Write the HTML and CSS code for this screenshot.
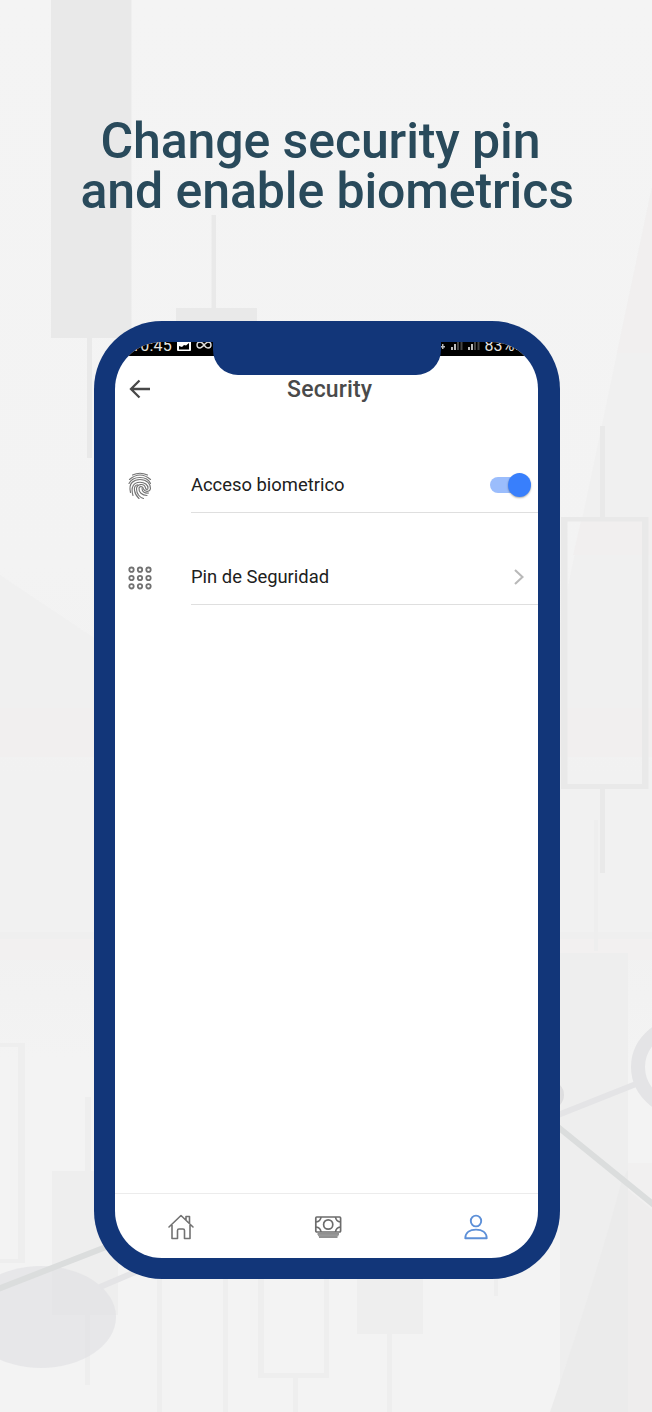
FILE: index.html
```html
<!DOCTYPE html>
<html lang="en">
<head>
<meta charset="utf-8">
<title>Security</title>
<link rel="stylesheet" href="styles.css">
</head>
<body>
<main class="poster">
  <svg class="backdrop" viewBox="0 0 652 1412" aria-hidden="true">
    <defs>
      <linearGradient id="base" x1="0" y1="0" x2="0" y2="1">
        <stop offset="0" stop-color="#f4f4f4"/><stop offset=".4" stop-color="#f3f3f3"/><stop offset=".55" stop-color="#f1f1f1"/><stop offset=".66" stop-color="#f1f1f1"/><stop offset=".75" stop-color="#f3f3f3"/><stop offset="1" stop-color="#f3f3f3"/>
      </linearGradient>
    </defs>
    <rect width="652" height="1412" fill="url(#base)"/>
    <path d="M0 575L94 638V708H0Z" fill="#f0f0f0"/>
    <path d="M0 708H94V757H0Z" fill="#f1efef"/>
    <path d="M652 187L570 577L540 720V757H652Z" fill="#f0f0f0"/>
    <path d="M652 187L617 353H652ZM582 517L573 555H652V517Z" fill="#f1efef"/>
    <path d="M560 708H652V757H560Z" fill="#f1efef"/>
    <path d="M0 932H652V939H0Z" fill="#efefef"/>
    <path d="M0 939H652V960H0Z" fill="#f2f0f0"/>
    <g fill="#e9e9e9">
      <path d="M51 0H131.500V338H51ZM87 338H92V458H87ZM211.500 215H216V308H211.500ZM176 308H257V340H176Z"/>
      <path d="M600 426H605V517H600ZM600 789H605V873H600Z"/>
      <path fill-rule="evenodd" d="M561 517H648.500V789H561ZM567.500 521.500V784H642V521.500Z"/>
    </g>
    <g fill="#eee">
      <path d="M594 820H598V951H594ZM560 953H628V1412H560Z"/>
      <path d="M85 1097H91V1171H85ZM52 1171H118V1315H52ZM85 1315H90V1385H85Z"/>
      <path fill-rule="evenodd" d="M-2 1043H25V1263H-2ZM-2 1047V1259H18V1047Z"/>
      <path d="M157 1270H162V1412H157ZM223 1270H228V1412H223ZM293 1378H298V1412H293ZM357 1270H423V1334H357ZM387 1334H392V1412H387ZM494 1270H498V1296H494Z"/>
      <path fill-rule="evenodd" d="M258 1270H329V1378H258ZM264 1270V1373H324V1270Z"/>
    </g>
    <path d="M628 1170V1412H550Q594 1285 622 1180Z" fill="#ebebeb"/>
    <path d="M628 1163H652V1412H628Z" fill="#eeeded"/>
    <path d="M628 1163H652V1210L628 1190Z" fill="#f1f0f0"/>
    <ellipse cx="41" cy="1317" rx="75" ry="51" fill="#dcdce0" opacity=".52"/>
    <g fill="none" stroke-width="6">
      <path d="M100 1287L140 1270M558 1115L636 1084" stroke="#e4e4e6"/>
      <path d="M-2 1289L106 1247M558 1127L654 1205" stroke="#dbdddd"/>
      <ellipse cx="693" cy="1067" rx="55" ry="46" stroke="#e4e4e6" stroke-width="14"/>
    </g>
    <ellipse cx="550" cy="1095" rx="14" ry="14" fill="#dedee0"/>
  </svg>

  <h1 class="headline"><span class="headline-top">Change security pin</span><span class="headline-bottom">and enable biometrics</span></h1>

  <section class="phone">
    <div class="screen">
      <div class="status">
        <span class="clock">10:45</span>
        <svg class="status-picture" viewBox="0 0 14 14"><path fill-rule="evenodd" d="M1 0H13Q14 0 14 1V12Q14 13 13 13H1Q0 13 0 12V1Q0 0 1 0ZM2 8V11.500H12V5L9 7.500L7 7L5 9Z" fill="#fff"/></svg>
        <svg class="status-loop" viewBox="0 0 16 8"><path d="M8 4C6 1 5 1 4 1Q1 1 1 4T4 7C6 7 10 1 12 1Q15 1 15 4T12 7C10 7 9 5.500 8 4Z" fill="none" stroke="#ddd" stroke-width="1.400"/></svg>
        <span class="status-gap"></span>
        <svg class="signals" viewBox="0 0 42 14"><g fill="#bbb"><path d="M0 9H2V11H0ZM3 7H4.500V9H6V10.500H4.500V12H3V10.500H2V9H3ZM12 10H14V13H12ZM15 7H17V13H15ZM29 10H31V13H29ZM32 7H34V13H32Z"/><path d="M18 3H20V13H18ZM21.500 0H23.500V13H21.500ZM35 3H37V13H35ZM38.500 0H40.500V13H38.500Z" fill="#444"/></g></svg>
        <span class="battery">83%</span>
        <svg class="cell" viewBox="0 0 8 14"><path d="M1 1H7V12H1Z" fill="#bbb"/></svg>
      </div>
      <div class="notch"></div>
      <header class="titlebar">
        <svg class="back" viewBox="0 0 22 20"><path d="M21 10H2M10.500 1.500L2 10L10.500 18.500" fill="none" stroke="#484848" stroke-width="2.300"/></svg>
        <h2 class="title">Security</h2>
      </header>
      <div class="list">
        <div class="item">
          <svg class="item-icon" viewBox="0 0 24 28"><g fill="none" stroke="#747474" stroke-width="1.150" stroke-linecap="round">
            <path d="M4.500 3Q12 -.5 19.500 3M1.500 7.500Q12 -1.500 22.500 7.500M1 11.500C5 3.500 19 3.500 22.500 11.500"/>
            <path d="M2.500 20.500C0 10.500 6.500 7.500 12 7.500C19 7.500 22.800 12 22.500 16.500C22 20 17 20.500 15.500 17C14.800 14 11.500 14 11 16C10.500 20 14 23.500 19 23.500"/>
            <path d="M5 23.500C2.500 15 5.500 10.200 12 10.200C17 10.200 20 13 20 16C20 18 18 18 17.500 16C16.500 11 8.500 11.500 8.500 17C8.500 22 12 25.500 15.500 26.500"/>
            <path d="M11 26.500C6 22 4.500 14 9.500 12.800M14 16.500C14 20 17 21.500 20.500 21"/>
          </g></svg>
          <div class="item-body"><span>Acceso biometrico</span><span class="switch"><span class="knob"></span></span></div>
        </div>
        <div class="item">
          <svg class="item-icon keypad" viewBox="0 0 24 24"><g fill="none" stroke="#717171" stroke-width="1.800"><circle cx="3.500" cy="3.700" r="2.200"/><circle cx="12" cy="3.700" r="2.200"/><circle cx="20.500" cy="3.700" r="2.200"/><circle cx="3.500" cy="12" r="2.200"/><circle cx="12" cy="12" r="2.200"/><circle cx="20.500" cy="12" r="2.200"/><circle cx="3.500" cy="20.300" r="2.200"/><circle cx="12" cy="20.300" r="2.200"/><circle cx="20.500" cy="20.300" r="2.200"/></g></svg>
          <div class="item-body pin"><span>Pin de Seguridad</span><svg class="chevron" viewBox="0 0 10 16"><path d="M1 1L8.500 8L1 15" fill="none" stroke="#b9b9b9" stroke-width="2.100"/></svg></div>
        </div>
      </div>
      <nav class="tabs">
        <svg class="tab" viewBox="0 0 28 28"><g fill="none" stroke="#727272" stroke-width="1.600" stroke-linejoin="round" stroke-linecap="round"><path d="M2 14L14 2.500L26 14M5 12V25.500H10.500V17.500Q10.500 16 12 16H16Q17.500 16 17.500 17.500V25.500H23V12M19 7V3.500H22.500V10"/></g></svg>
        <svg class="tab" viewBox="0 0 28 28"><g fill="none" stroke="#6c6c6c" stroke-width="1.700"><rect x="1.800" y="4" width="24.800" height="15" rx="1"/><ellipse cx="14.200" cy="11.500" rx="4.600" ry="4.700"/><path d="M2 9Q6.500 8.500 7 4M21.500 4Q22 8.500 26.500 9M2 14Q6.500 14.500 7 19M21.500 19Q22 14.500 26.500 14M3.500 21H25M5 24H23.500" /><path d="M4 22.300H24.500" stroke="#999"/></g></svg>
        <svg class="tab" viewBox="0 0 28 28"><g fill="none" stroke="#5d90d8" stroke-width="1.900" stroke-linejoin="round"><ellipse cx="14" cy="8" rx="5.200" ry="5.400"/><path d="M3.300 25.300C3.300 19.500 8 16.600 14 16.600S24.700 19.500 24.700 25.300Z"/></g></svg>
      </nav>
    </div>
  </section>
</main>
</body>
</html>
```
FILE: styles.css
```css
* { box-sizing: border-box; }
body { margin: 0; background: #f4f4f4; font-family: Roboto, "Liberation Sans", sans-serif; }
.poster { position: relative; width: 652px; height: 1412px; overflow: hidden; padding-top: 116px; }
.backdrop { position: absolute; left: 0; top: 0; width: 652px; height: 1412px; }
.headline { position: relative; margin: 0; height: 205px; padding-left: 80.500px; font-size: 50px; line-height: 50px; letter-spacing: -.1px; font-weight: 500; color: #294a5b; white-space: nowrap; }
.headline span { display: block; }
.headline-top { padding-left: 20px; }
.phone { position: relative; margin-left: 94px; width: 465.500px; height: 958px; padding: 21px; border-radius: 68px; background: #123679; }
.screen { position: relative; display: flex; flex-direction: column; width: 423.400px; height: 916px; overflow: hidden; border-radius: 47px; background: #fff; }
.status { display: flex; flex: none; align-items: flex-start; height: 14px; padding: 0 15px 0 16px; overflow: hidden; background: #000; color: #e4e4e4; font-size: 16px; line-height: 16px; }
.clock, .battery { margin-top: -4px; letter-spacing: .2px; }
.clock { width: 46px; }
.status-picture { width: 14px; height: 14px; margin-top: -4px; }
.status-loop { width: 16px; height: 8px; margin: -1px 0 0 5px; }
.status-gap { flex: 1; }
.signals { width: 42px; height: 14px; margin: -5px 3px 0 0; }
.battery { width: 31px; }
.cell { width: 8px; height: 14px; margin-top: -4px; }
.notch { position: absolute; top: -1px; left: 98px; width: 228px; height: 34px; border-radius: 0 0 25px 25px; background: #123679; }
.titlebar { display: grid; grid-template-columns: 46px 1fr 54px; align-items: center; height: 66px; padding-left: 14px; }
.back { width: 22px; height: 20px; }
.title { margin: 2px 0 0; text-align: center; font-size: 23px; letter-spacing: .15px; line-height: 28px; font-weight: 500; color: #4a4a4a; }
.list { display: flex; flex-direction: column; flex: 1; }
.item { display: flex; height: 92px; align-items: flex-end; }
.item:first-child { height: 91px; }
.item-icon { width: 24px; height: 28px; margin: 0 39px 13px 13px; }
.keypad { height: 24px; margin-bottom: 15px; }
.item-body { display: flex; flex: 1; height: 56px; align-items: center; justify-content: space-between; padding-right: 7.500px; border-bottom: 1.500px solid #dfdfdf; font-size: 18.400px; color: #202020; }
.pin { padding-right: 14px; }
.switch { position: relative; width: 41px; height: 24px; display: flex; align-items: center; }
.switch::before { content: ""; width: 34px; height: 16px; border-radius: 8px; background: #9bbdfc; }
.knob { position: absolute; right: 0; top: 0; width: 23px; height: 24px; border-radius: 50%; background: #387ffc; box-shadow: 0 1px 2px #0005; }
.chevron { width: 10px; height: 16px; }
.tabs { display: flex; flex: none; align-items: flex-start; justify-content: space-between; height: 65px; padding: 19px 48.500px 0 52px; border-top: 1px solid #ececec; }
.tab { width: 28px; height: 28px; }
```
